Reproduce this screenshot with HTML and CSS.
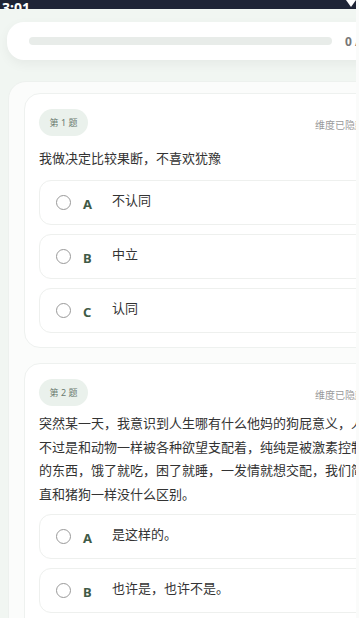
FILE: index.html
```html
<!DOCTYPE html>
<html lang="zh-CN">

<head>
  <meta charset="UTF-8">
  <meta name="viewport" content="width=device-width, initial-scale=1.0">
  <title>性格测试</title>
  <link rel="stylesheet" href="styles.css">
</head>

<body>
  <div class="page">
    <!-- 状态栏 -->
    <div class="status-bar">
      <span class="status-time">3:01</span>
      <svg class="status-icon" width="10" height="8" viewBox="0 0 10 8">
        <path d="M0 0 L10 0 L5 7 Z" fill="#FFFFFF" />
      </svg>
    </div>

    <!-- 进度条 -->
    <div class="progress-card">
      <div class="progress-track"></div>
      <span class="progress-text">0 / 30</span>
    </div>

    <!-- 题目列表 -->
    <div class="question-panel">
      <!-- 第1题 -->
      <div class="question-card">
        <div class="question-header">
          <span class="question-badge">第 1 题</span>
          <span class="question-hint">维度已隐藏</span>
        </div>
        <p class="question-text">我做决定比较果断，不喜欢犹豫</p>
        <div class="option-list">
          <div class="option-item">
            <span class="option-radio"></span>
            <span class="option-letter">A</span>
            <span class="option-text">不认同</span>
          </div>
          <div class="option-item">
            <span class="option-radio"></span>
            <span class="option-letter">B</span>
            <span class="option-text">中立</span>
          </div>
          <div class="option-item">
            <span class="option-radio"></span>
            <span class="option-letter">C</span>
            <span class="option-text">认同</span>
          </div>
        </div>
      </div>

      <!-- 第2题 -->
      <div class="question-card">
        <div class="question-header">
          <span class="question-badge">第 2 题</span>
          <span class="question-hint">维度已隐藏</span>
        </div>
        <p class="question-text question-long">突然某一天，我意识到人生哪有什么他妈的狗屁意义，人不过是和动物一样被各种欲望支配着，纯纯是被激素控制的东西，饿了就吃，困了就睡，一发情就想交配，我们简直和猪狗一样没什么区别。</p>
        <div class="option-list">
          <div class="option-item">
            <span class="option-radio"></span>
            <span class="option-letter">A</span>
            <span class="option-text">是这样的。</span>
          </div>
          <div class="option-item">
            <span class="option-radio"></span>
            <span class="option-letter">B</span>
            <span class="option-text">也许是，也许不是。</span>
          </div>
          <div class="option-item">
            <span class="option-radio"></span>
            <span class="option-letter">C</span>
            <span class="option-text">完全不是这样。</span>
          </div>
        </div>
      </div>
    </div>
  </div>
</body>

</html>
```

FILE: styles.css
```css
/* 全局重置 */
* {
  margin: 0;
  padding: 0;
  box-sizing: border-box;
}

body {
  background: #FAFBFA;
  font-family: "Noto Sans", "Noto Sans CJK SC", sans-serif;
  color: #333;
  width: 359px;
  height: 618px;
  overflow: hidden;
}

/* 页面容器，右侧被裁切 */
.page {
  width: 356px;
  height: 618px;
  overflow: hidden;
  background: #F1F6F2;
}

/* 状态栏 */
.status-bar {
  height: 9px;
  background: #1E2436;
  display: flex;
  justify-content: space-between;
  align-items: flex-end;
  overflow: hidden;
  padding: 0 2px 0 2px;
}

.status-time {
  color: #FFFFFF;
  font-size: 14px;
  font-weight: 700;
  line-height: 14px;
  margin-bottom: -6px;
}

.status-icon {
  margin-bottom: 1px;
  margin-right: -2px;
}

/* 进度卡片 */
.progress-card {
  width: 400px;
  height: 38px;
  margin: 13px 0 0 7px;
  background: #FFFFFF;
  border-radius: 17px;
  box-shadow: 0 4px 12px rgba(0, 0, 0, 0.05);
  display: flex;
  align-items: center;
  padding-left: 22px;
}

.progress-track {
  width: 303px;
  height: 8px;
  background: #E8ECE9;
  border-radius: 4px;
  flex-shrink: 0;
}

.progress-text {
  margin-left: 13px;
  font-size: 12px;
  font-weight: 700;
  color: #777;
  white-space: nowrap;
}

/* 题目外层面板 */
.question-panel {
  width: 400px;
  margin: 21px 0 0 8px;
  padding: 11px 15px;
  background: #FBFCFB;
  border: 1px solid #EDF1EE;
  border-radius: 18px;
  display: flex;
  flex-direction: column;
  gap: 15px;
}

/* 单个题目卡片 */
.question-card {
  width: 360px;
  background: #FFFFFF;
  border: 1px solid #EEF1EF;
  border-radius: 16px;
  padding: 15px 14px 14px;
}

.question-header {
  display: flex;
  justify-content: space-between;
  align-items: center;
  padding-right: 4px;
}

.question-badge {
  width: 49px;
  height: 27px;
  border-radius: 14px;
  background: #EAF1EC;
  color: #6B7A70;
  font-size: 9px;
  display: flex;
  align-items: center;
  justify-content: center;
}

.question-hint {
  font-size: 10px;
  color: #9A9A9A;
  margin-top: 3px;
}

.question-text {
  font-size: 13px;
  line-height: 20px;
  color: #333;
  margin: 12px 0 12px;
}

.question-long {
  width: 330px;
  line-height: 23.5px;
  margin: 6px 0 8px;
}

/* 选项 */
.option-list {
  display: flex;
  flex-direction: column;
  gap: 9px;
}

.option-item {
  height: 45px;
  border: 1px solid #EEF0EE;
  border-radius: 12px;
  display: flex;
  align-items: center;
  padding-left: 16px;
}

.option-radio {
  width: 15px;
  height: 15px;
  border: 1.5px solid #999;
  border-radius: 50%;
  margin-right: 12px;
  flex-shrink: 0;
}

.option-letter {
  width: 29px;
  font-size: 13px;
  font-weight: 700;
  color: #3F5A47;
  margin-top: 2px;
}

.option-text {
  font-size: 13px;
  color: #333;
  margin-bottom: 6px;
}
```
